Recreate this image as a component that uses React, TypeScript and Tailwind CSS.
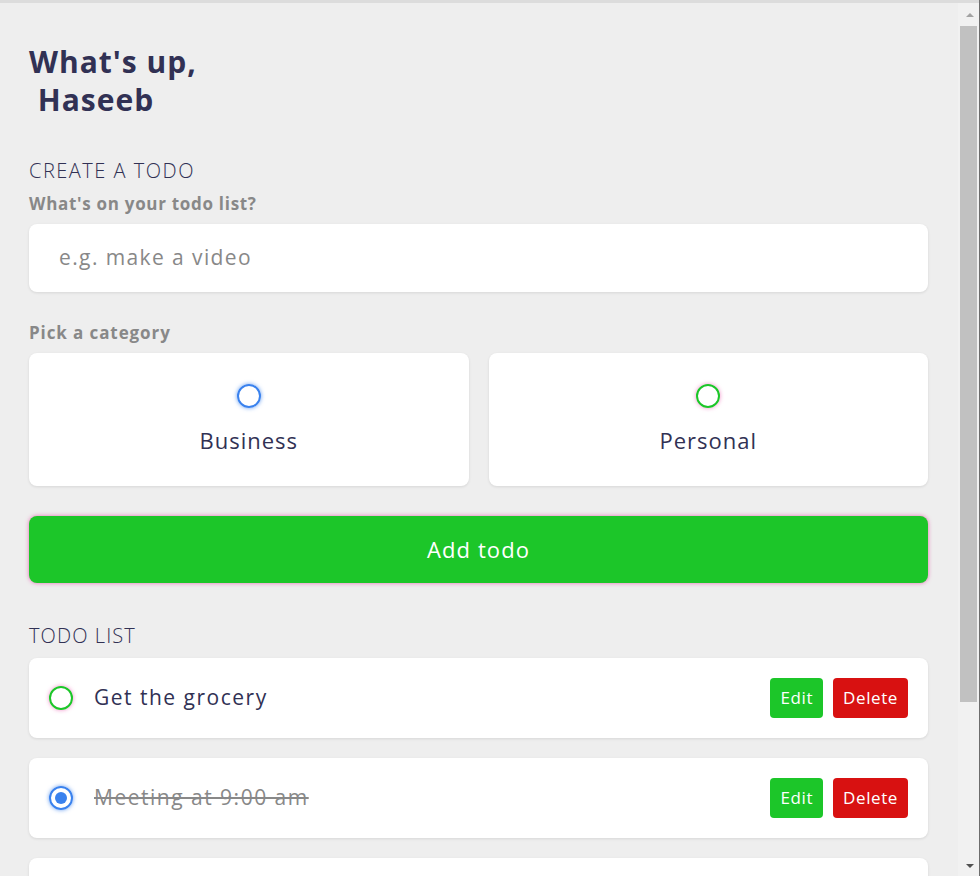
import React from "react";

function Bubble({ color, glow, checked }: { color: string; glow: string; checked?: boolean }) {
  return (
    <span
      className={`flex h-[24px] w-[24px] shrink-0 items-center justify-center rounded-full border-2 ${color} ${glow}`}
    >
      {checked ? <span className="h-[12px] w-[12px] rounded-full bg-[#3a82ee]" /> : null}
    </span>
  );
}

function TodoRow({ text, done, green }: { text: string; done?: boolean; green?: boolean }) {
  return (
    <div className="flex h-[80px] shrink-0 items-center rounded-[8px] bg-white px-[20px] shadow-[0_1px_3px_rgba(0,0,0,0.1)]">
      {green ? (
        <Bubble color="border-[#1cc629]" glow="shadow-[0_0_4px_rgba(234,64,164,0.6)]" />
      ) : (
        <Bubble color="border-[#3a82ee]" glow="shadow-[0_0_4px_rgba(58,130,238,0.75)]" checked={done} />
      )}
      <span
        className={`ml-[21px] flex-1 text-[21px] tracking-[1.5px] ${done ? "text-[#888888] line-through" : "text-[#313154]"}`}
      >
        {text}
      </span>
      <div className="flex gap-[10px]">
        <button className="h-[40px] rounded-[4px] bg-[#1cc629] px-[10px] text-[17px] tracking-[0.6px] text-white">Edit</button>
        <button className="h-[40px] rounded-[4px] bg-[#d81111] px-[10px] text-[17px] tracking-[0.6px] text-white">Delete</button>
      </div>
    </div>
  );
}

export default function App() {
  return (
    <div className="flex h-[876px] w-[980px] flex-col overflow-hidden bg-[#eeeeee] font-['Open_Sans',sans-serif]">
      <div className="flex h-[3px] shrink-0">
        <div className="flex-1 bg-[#dcdcdc]" />
        <div className="w-px bg-[#6d6d6d]" />
      </div>
      <div className="flex min-h-0 flex-1">
        <main className="flex min-w-0 flex-1 flex-col overflow-hidden pl-[29px] pr-[30px] pt-[40px]">
          <h1 className="text-[30px] font-bold leading-[38px] tracking-[1px] text-[#313154]">
            What's up,
            <br />
            {"\u00a0"}Haseeb
          </h1>

          <h2 className="mt-[40px] text-[20px] font-light leading-[24px] tracking-[1.5px] text-[#313154]">CREATE A TODO</h2>
          <p className="mt-[11px] text-[17px] font-bold leading-[20px] tracking-[0.7px] text-[#888888]">What's on your todo list?</p>
          <div className="mt-[10px] flex h-[68px] shrink-0 items-center rounded-[8px] bg-white px-[30px] shadow-[0_1px_3px_rgba(0,0,0,0.1)]">
            <span className="text-[21px] tracking-[1.4px] text-[#888888]">e.g. make a video</span>
          </div>

          <p className="mt-[31px] text-[17px] font-bold leading-[20px] tracking-[0.9px] text-[#888888]">Pick a category</p>
          <div className="mt-[10px] grid shrink-0 grid-cols-2 gap-[20px]">
            <div className="flex h-[133px] flex-col items-center rounded-[8px] bg-white pt-[31px] shadow-[0_1px_3px_rgba(0,0,0,0.1)]">
              <Bubble color="border-[#3a82ee]" glow="shadow-[0_0_4px_rgba(58,130,238,0.75)]" />
              <span className="mt-[18px] text-[22px] leading-[28px] tracking-[1px] text-[#313154]">Business</span>
            </div>
            <div className="flex h-[133px] flex-col items-center rounded-[8px] bg-white pt-[31px] shadow-[0_1px_3px_rgba(0,0,0,0.1)]">
              <Bubble color="border-[#1cc629]" glow="shadow-[0_0_4px_rgba(234,64,164,0.6)]" />
              <span className="mt-[18px] text-[22px] leading-[28px] tracking-[1px] text-[#313154]">Personal</span>
            </div>
          </div>

          <button className="mt-[30px] flex h-[67px] shrink-0 items-center justify-center rounded-[8px] bg-[#1cc629] text-[22px] tracking-[1.1px] text-white shadow-[0_0_4px_rgba(234,64,164,0.75)]">
            Add todo
          </button>

          <h2 className="mt-[41px] text-[20px] font-light leading-[24px] tracking-[1.1px] text-[#313154]">TODO LIST</h2>
          <div className="mt-[10px] flex flex-col gap-[20px]">
            <TodoRow text="Get the grocery" green />
            <TodoRow text="Meeting at 9:00 am" done />
            <TodoRow text="Call the plumber" />
          </div>
        </main>

        <div className="flex w-[21px] shrink-0 flex-col bg-[#f1f1f1]">
          <div className="flex h-[23px] shrink-0 items-center justify-center pl-[2px]">
            <span className="h-0 w-0 border-x-[4px] border-b-[4px] border-x-transparent border-b-[#a3a3a3]" />
          </div>
          <div className="ml-[2px] h-[676px] w-[17px] bg-[#c1c1c1]" />
          <div className="flex flex-1 items-end justify-center pb-[8px] pl-[2px]">
            <span className="h-0 w-0 border-x-[4px] border-t-[4px] border-x-transparent border-t-[#505050]" />
          </div>
        </div>
        <div className="w-px bg-[#6d6d6d]" />
      </div>
    </div>
  );
}
